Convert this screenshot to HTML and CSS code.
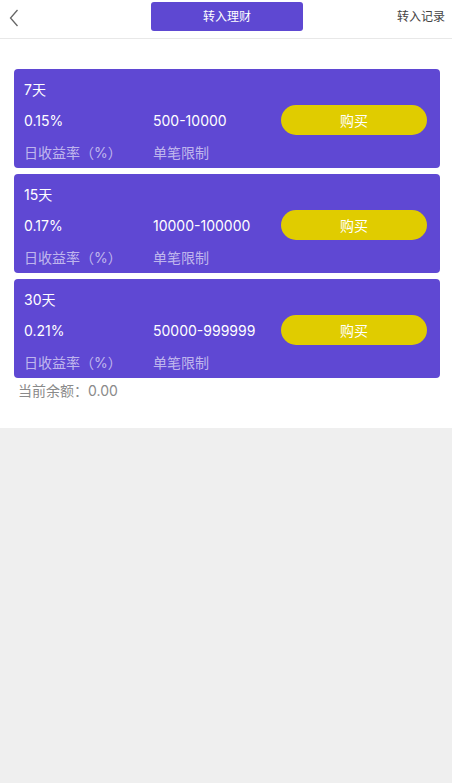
FILE: index.html
```html
<!DOCTYPE html>
<html lang="zh">
<head>
<meta charset="utf-8">
<title>转入理财</title>
<link rel="stylesheet" href="styles.css">
</head>
<body>
<div class="page">
  <header class="header">
    <span class="back">
      <svg width="10" height="18" viewBox="0 0 10 18"><path d="M8.5 1 L1.5 9 L8.5 17" fill="none" stroke="#666" stroke-width="1.3"/></svg>
    </span>
    <span class="tab">转入理财</span>
    <span class="record">转入记录</span>
  </header>
  <main class="content">
    <div class="card">
      <div class="title">7天</div>
      <div class="row">
        <span>0.15%</span><span>500-10000</span><button class="buy">购买</button>
      </div>
      <div class="row labels">
        <span>日收益率（%）</span><span>单笔限制</span>
      </div>
    </div>
    <div class="card">
      <div class="title">15天</div>
      <div class="row">
        <span>0.17%</span><span>10000-100000</span><button class="buy">购买</button>
      </div>
      <div class="row labels">
        <span>日收益率（%）</span><span>单笔限制</span>
      </div>
    </div>
    <div class="card">
      <div class="title">30天</div>
      <div class="row">
        <span>0.21%</span><span>50000-999999</span><button class="buy">购买</button>
      </div>
      <div class="row labels">
        <span>日收益率（%）</span><span>单笔限制</span>
      </div>
    </div>
    <div class="balance">当前余额：0.00</div>
  </main>
</div>
</body>
</html>
```
FILE: styles.css
```css
html, body {
  margin: 0;
  padding: 0;
}
body {
  background: #efefef;
  font-family: Inter, "Noto Sans CJK SC", sans-serif;
  height: 783px;
}
.page {
  background: #fff;
}
.header {
  height: 38px;
  border-bottom: 1px solid #e8e8e8;
  display: flex;
  align-items: flex-start;
  justify-content: space-between;
  position: relative;
}
.back {
  width: 10px;
  height: 18px;
  margin: 9px 0 0 9px;
  display: block;
}
.back svg { display: block; }
.tab {
  position: absolute;
  left: 151px;
  top: 2px;
  width: 152px;
  height: 29px;
  background: #5e48d2;
  border-radius: 3px;
  color: #fff;
  font-size: 12px;
  line-height: 29px;
  text-align: center;
}
.record {
  font-size: 12px;
  color: #444;
  line-height: 34px;
  margin-right: 7px;
}
.content {
  padding: 30px 12px 26px 14px;
  display: flex;
  flex-direction: column;
  gap: 6px;
}
.card {
  background: #5f48d3;
  border-radius: 4px;
  height: 99px;
  box-sizing: border-box;
  padding: 10px 0 0 10px;
  color: #fff;
  font-size: 14px;
}
.title {
  line-height: 22px;
  height: 22px;
}
.row {
  display: grid;
  grid-template-columns: 129px 128px 146px;
  align-items: center;
  height: 30px;
  margin-top: 4px;
}
.labels {
  height: 22px;
  margin-top: 6px;
  color: rgba(255, 255, 255, 0.62);
}
.buy {
  height: 30px;
  width: 146px;
  border: none;
  border-radius: 15px;
  background: #e0cc00;
  color: #fff;
  font-family: inherit;
  font-size: 14px;
  padding: 0;
}
.balance {
  margin-top: -4px;
  padding-left: 4px;
  font-size: 14px;
  line-height: 22px;
  color: #8a8a8a;
}
```
